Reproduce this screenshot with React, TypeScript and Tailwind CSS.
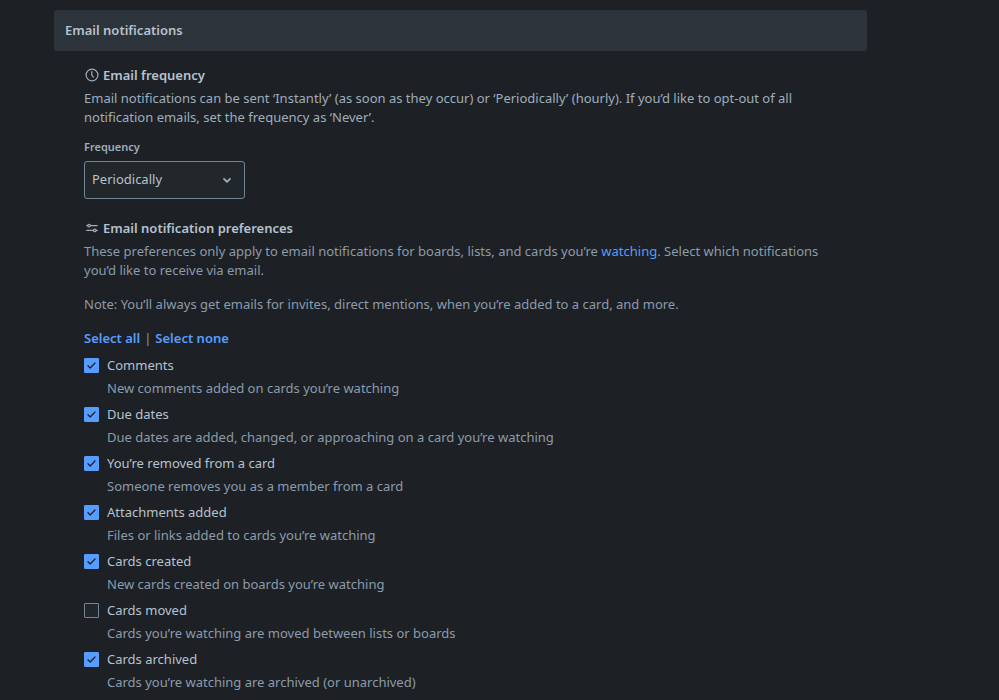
import { useState } from "react";

const preferences = [
    { id: "comments", label: "Comments", text: "New comments added on cards you’re watching", checked: true },
    { id: "due-dates", label: "Due dates", text: "Due dates are added, changed, or approaching on a card you’re watching", checked: true },
    { id: "removed", label: "You’re removed from a card", text: "Someone removes you as a member from a card", checked: true },
    { id: "attachments", label: "Attachments added", text: "Files or links added to cards you’re watching", checked: true },
    { id: "created", label: "Cards created", text: "New cards created on boards you’re watching", checked: true },
    { id: "moved", label: "Cards moved", text: "Cards you’re watching are moved between lists or boards", checked: false },
    { id: "archived", label: "Cards archived", text: "Cards you’re watching are archived (or unarchived)", checked: true },
];

function ClockIcon() {
    return (
        <svg viewBox="0 0 16 16" fill="none" stroke="currentColor" strokeWidth="1.2" className="size-4 text-[#9fadbc]" aria-hidden="true">
            <circle cx="8" cy="8" r="5.9" />
            <path d="M7.8 4.5V8l1.6 2.2" strokeLinecap="round" />
        </svg>
    );
}

function SlidersIcon() {
    return (
        <svg viewBox="0 0 16 16" fill="none" stroke="currentColor" strokeWidth="1.2" strokeLinecap="round" className="size-4 text-[#9fadbc]" aria-hidden="true">
            <path d="M2.8 5.6h.6M6.6 5.6h6.6M2.8 10.4h6.4M12.4 10.4h.8" />
            <circle cx="5" cy="5.6" r="1.3" />
            <circle cx="10.8" cy="10.4" r="1.3" />
        </svg>
    );
}

export default function App() {
    const [selected, setSelected] = useState(preferences.filter((p) => p.checked).map((p) => p.id));

    const toggle = (id: string) => {
        setSelected((current) => (current.includes(id) ? current.filter((item) => item !== id) : [...current, id]));
    };

    return (
        <main className="min-h-screen bg-[#1d2125] pt-[10px] pr-[132px] pl-[54px] font-['Noto_Sans',sans-serif] text-[13px] leading-[19px] text-[#8c9bab]">
            <h2 className="flex h-[41px] items-center rounded-[3px] bg-[#2c333a] px-[11px] font-semibold text-[#b6c2cf]">Email notifications</h2>

            <div className="px-[30px] pt-[14px]">
                <section>
                    <h3 className="flex h-5 items-center gap-[3px] font-semibold text-[#b6c2cf]">
                        <ClockIcon />
                        Email frequency
                    </h3>
                    <p className="mt-1 text-[#9fadbc]">
                        Email notifications can be sent ‘Instantly’ (as soon as they occur) or ‘Periodically’ (hourly). If you’d like to opt-out of all notification emails, set the frequency as ‘Never’.
                    </p>

                    <label htmlFor="frequency" className="mt-3 block text-[11px] leading-4 font-semibold text-[#9fadbc]">
                        Frequency
                    </label>
                    <div className="mt-[6px] grid w-[161px] items-center">
                        <select
                            id="frequency"
                            defaultValue="Periodically"
                            className="col-start-1 row-start-1 h-[38px] w-full appearance-none rounded-[3px] border border-[#738496] bg-[#22272b] pr-8 pb-[2px] pl-[7px] text-[#b6c2cf]"
                        >
                            <option>Never</option>
                            <option>Periodically</option>
                            <option>Instantly</option>
                        </select>
                        <svg viewBox="0 0 16 16" fill="none" stroke="#9fadbc" strokeWidth="1.8" strokeLinecap="round" strokeLinejoin="round" className="pointer-events-none col-start-1 row-start-1 mr-[10px] size-4 justify-self-end" aria-hidden="true">
                            <path d="M5 6.8l3 3 3-3" />
                        </svg>
                    </div>
                </section>

                <section className="mt-[19px]">
                    <h3 className="flex h-5 items-center gap-[3px] font-semibold text-[#b6c2cf]">
                        <SlidersIcon />
                        Email notification preferences
                    </h3>
                    <p className="mt-1">
                        These preferences only apply to email notifications for boards, lists, and cards you’re{" "}
                        <a href="#watching" className="text-[#579dff]">watching</a>. Select which notifications you’d like to receive via email.
                    </p>
                    <p className="mt-[15px]">Note: You’ll always get emails for invites, direct mentions, when you’re added to a card, and more.</p>

                    <div className="mt-[15px] flex gap-1">
                        <button type="button" onClick={() => setSelected(preferences.map((p) => p.id))} className="font-semibold text-[#579dff]">
                            Select all
                        </button>
                        <span>|</span>
                        <button type="button" onClick={() => setSelected([])} className="font-semibold text-[#579dff]">
                            Select none
                        </button>
                    </div>

                    <ul className="mt-[7px] flex flex-col gap-[5px]">
                        {preferences.map((item) => (
                            <li key={item.id}>
                                <div className="flex h-5 items-center gap-2">
                                    <span className="grid size-[15px] shrink-0">
                                        <input
                                            id={item.id}
                                            type="checkbox"
                                            checked={selected.includes(item.id)}
                                            onChange={() => toggle(item.id)}
                                            className="peer col-start-1 row-start-1 size-[15px] appearance-none rounded-[1px] border border-[#738496] bg-[#22272b] checked:border-[#579dff] checked:bg-[#579dff]"
                                        />
                                        <svg viewBox="0 0 15 15" fill="none" stroke="#1d2125" strokeWidth="1.3" strokeLinecap="round" strokeLinejoin="round" className="pointer-events-none col-start-1 row-start-1 hidden size-[15px] peer-checked:block" aria-hidden="true">
                                            <path d="M4 7.8l2.2 2.2L11 5" />
                                        </svg>
                                    </span>
                                    <label htmlFor={item.id} className="text-[#b6c2cf]">{item.label}</label>
                                </div>
                                <p className="mt-1 h-5 pl-[23px]">{item.text}</p>
                            </li>
                        ))}
                    </ul>
                </section>
            </div>
        </main>
    );
}
